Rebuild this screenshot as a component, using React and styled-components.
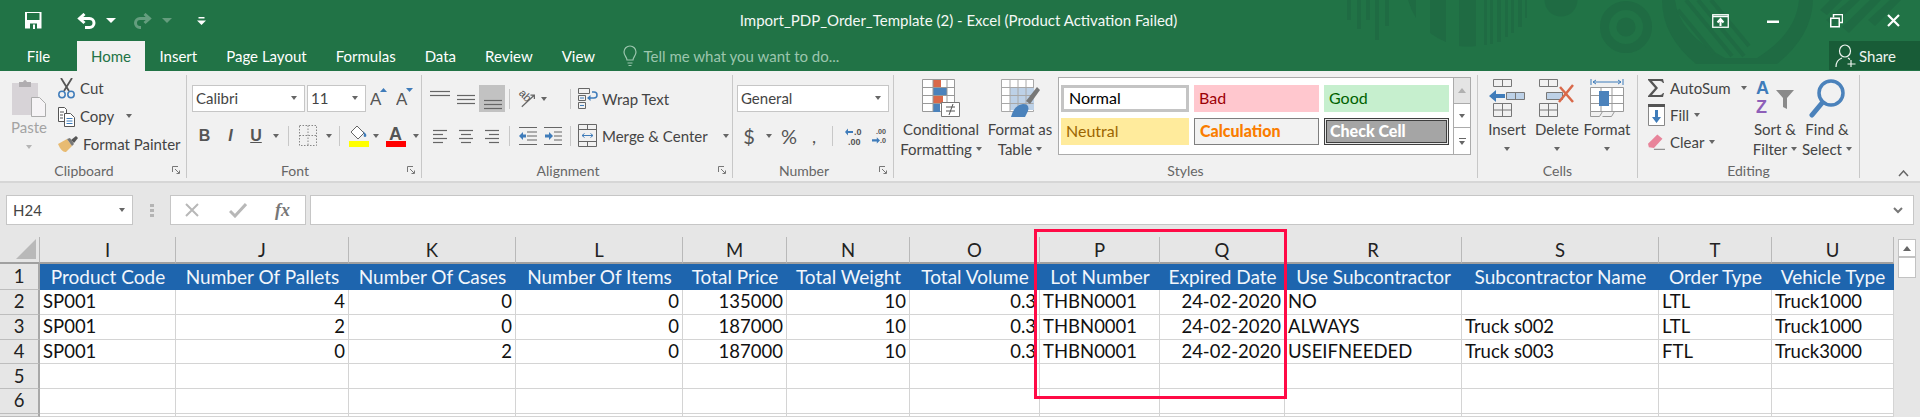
import React from "react";
import styled, { createGlobalStyle } from "styled-components";

const GlobalStyle = createGlobalStyle`
  html, body { margin: 0; padding: 0; background: #fff; }
  body { font-family: "Lato", "Open Sans", sans-serif; overflow: hidden; }
`;

const Page = styled.div`
  position: relative;
  width: 1920px;
  height: 417px;
  overflow: hidden;
`;

/* ---------- title bar ---------- */
const Head = styled.header`
  position: relative;
  height: 71px;
  background: #217346;
  color: #fff;
  overflow: hidden;
`;

const Decoration = styled.svg`
  position: absolute;
  left: 1340px;
  top: 0;
`;

const TitleRow = styled.div`
  position: relative;
  display: grid;
  grid-template-columns: 1fr auto 1fr;
  align-items: center;
  height: 41px;
`;

const Qat = styled.div`
  display: flex;
  align-items: center;
  padding-left: 25px;
`;

const QatItem = styled.span`
  display: flex;
  margin-left: ${(p) => p.$ml || 0}px;
  opacity: ${(p) => (p.$off ? 0.3 : 1)};
`;

const WhiteCaret = styled.i`
  display: block;
  width: 0;
  height: 0;
  border-left: 5px solid transparent;
  border-right: 5px solid transparent;
  border-top: 5px solid #fff;
`;

const Title = styled.div`
  font-size: 15px;
  color: #f4f8f5;
  padding-bottom: 2px;
  margin-right: 3px;
`;

const WinControls = styled.div`
  display: flex;
  justify-content: flex-end;
  align-items: center;
  padding-right: 20px;
`;

const WinBtn = styled.span`
  display: flex;
  justify-content: center;
  margin-left: ${(p) => p.$ml}px;
`;

const TabRow = styled.nav`
  position: relative;
  display: flex;
  align-items: stretch;
  height: 30px;
`;

const Tab = styled.div`
  display: flex;
  align-items: center;
  justify-content: center;
  width: ${(p) => (p.$w ? `${p.$w}px` : "auto")};
  padding: ${(p) => (p.$w ? "0" : "0 14.5px")};
  font-size: 15px;
  color: ${(p) => (p.$active ? "#217346" : "#fff")};
  background: ${(p) => (p.$active ? "#f1f1f1" : "transparent")};
`;

const TellMe = styled.div`
  display: flex;
  align-items: center;
  gap: 7px;
  margin-left: 13px;
  font-size: 15px;
  color: #9cc6ae;
`;

const Share = styled.div`
  display: flex;
  align-items: center;
  gap: 2px;
  margin-left: auto;
  width: 91px;
  height: 29px;
  padding-left: 6px;
  box-sizing: border-box;
  background: #185c37;
  font-size: 15px;
  color: #eef4f0;
`;

/* ---------- ribbon ---------- */
const Ribbon = styled.section`
  display: flex;
  box-sizing: border-box;
  height: 112px;
  padding-top: 4px;
  background: #f1f1f1;
  border-bottom: 2px solid #d6d6d6;
  font-size: 15px;
  color: #444;
`;

const Group = styled.div`
  display: flex;
  flex-direction: column;
  box-sizing: border-box;
  width: ${(p) => p.$w}px;
  height: 103px;
  border-right: 1px solid #c8c8c8;
`;

const GroupBody = styled.div`
  flex: 1;
  display: flex;
  min-height: 0;
  padding-left: ${(p) => p.$pl || 0}px;
`;

const GroupFoot = styled.div`
  display: flex;
  align-items: center;
  height: 12px;
  padding-bottom: 2px;
  font-size: 14px;
  color: #666;
`;

const GroupName = styled.span`
  flex: 1;
  text-align: center;
`;

const Launcher = styled.svg`
  width: 8px;
  height: 8px;
  margin: 0 6px 0 4px;
`;

const Caret = styled.i`
  display: block;
  flex-shrink: 0;
  width: 0;
  height: 0;
  border-left: 3.5px solid transparent;
  border-right: 3.5px solid transparent;
  border-top: 4px solid ${(p) => p.$c || "#666"};
  margin-left: ${(p) => p.$ml || 0}px;
`;

const PasteCol = styled.div`
  display: flex;
  flex-direction: column;
  align-items: center;
  width: 58px;
  color: #a3a3a3;
  padding-top: 4px;
`;

const PasteLabel = styled.div`
  line-height: 20px;
`;

const SmallCol = styled.div`
  display: flex;
  flex-direction: column;
  width: ${(p) => (p.$w ? `${p.$w}px` : "auto")};
  flex-shrink: 0;
  margin-top: -1px;
`;

const SmallBtn = styled.div`
  display: flex;
  align-items: center;
  height: ${(p) => p.$h || 28}px;
  gap: ${(p) => p.$gap || 5}px;
  white-space: nowrap;
`;

const IconSlot = styled.span`
  display: flex;
  justify-content: center;
  width: ${(p) => p.$w || 17}px;
  flex-shrink: 0;
  margin-top: 1px;
`;

const ToolRows = styled.div`
  display: flex;
  flex-direction: column;
  gap: 10px;
  padding-top: 10px;
`;

const ToolRow = styled.div`
  display: flex;
  align-items: center;
  height: 27px;
  white-space: nowrap;
`;

const Combo = styled.div`
  display: flex;
  align-items: center;
  justify-content: space-between;
  box-sizing: border-box;
  width: ${(p) => p.$w}px;
  height: 27px;
  margin-right: ${(p) => p.$mr || 0}px;
  padding: 0 7px 2px 3px;
  background: #fff;
  border: 1px solid #c6c6c6;
`;

const Cell = styled.span`
  display: flex;
  align-items: center;
  justify-content: center;
  flex-shrink: 0;
  width: ${(p) => p.$w}px;
  height: ${(p) => (p.$on ? "27px" : "auto")};
  background: ${(p) => (p.$on ? "#c2c2c2" : "transparent")};
`;

const Sep = styled.span`
  flex-shrink: 0;
  width: 1px;
  height: 20px;
  background: #c8c8c8;
  margin-left: ${(p) => p.$l}px;
  margin-right: ${(p) => p.$r}px;
`;

const FontBtn = styled.span`
  font-family: "Liberation Sans", sans-serif;
  font-size: ${(p) => p.$s || 16}px;
  font-weight: ${(p) => (p.$bold ? 700 : 400)};
  font-style: ${(p) => (p.$italic ? "italic" : "normal")};
  text-decoration: ${(p) => (p.$under ? "underline" : "none")};
  color: #555;
`;

const MoneyBtn = styled.span`
  font-size: ${(p) => p.$s || 20}px;
  color: #555;
`;

const BigBtn = styled.div`
  display: flex;
  flex-direction: column;
  align-items: center;
  flex-shrink: 0;
  width: ${(p) => p.$w}px;
  padding-top: 4px;
`;

const BigIcon = styled.div`
  display: flex;
  justify-content: center;
  height: 40px;
`;

const BigLine = styled.div`
  display: flex;
  align-items: center;
  justify-content: center;
  gap: 4px;
  height: 20px;
  white-space: nowrap;
`;

const Gallery = styled.div`
  display: flex;
  box-sizing: border-box;
  width: 413px;
  height: 78px;
  margin-top: 2px;
  background: #fff;
  border: 1px solid #ababab;
`;

const StyleGrid = styled.div`
  display: grid;
  grid-template-columns: 128px 125px 125px;
  grid-template-rows: 27px 27px;
  column-gap: 5px;
  row-gap: 6px;
  padding: 7px 0 0 2px;
  width: 394px;
  box-sizing: border-box;
`;

const StyleCell = styled.div`
  display: flex;
  align-items: center;
  box-sizing: border-box;
  padding: 0 0 2px 5px;
  font-size: 16px;
  font-weight: ${(p) => (p.$bold ? 900 : 400)};
  color: ${(p) => p.$c};
  background: ${(p) => p.$bg};
  border: ${(p) => p.$border || "none"};
  box-shadow: ${(p) => p.$shadow || "none"};
`;

const GalleryScroll = styled.div`
  display: flex;
  flex-direction: column;
  flex: 1;
  border-left: 1px solid #ababab;
`;

const GalleryBtn = styled.div`
  display: flex;
  flex-direction: column;
  align-items: center;
  justify-content: center;
  gap: 2px;
  flex: ${(p) => p.$h} 0 0;
  background: ${(p) => (p.$off ? "#e4e4e4" : "#fff")};
  border-bottom: ${(p) => (p.$last ? "none" : "1px solid #ababab")};
`;

const MiniBar = styled.i`
  display: block;
  width: 7px;
  height: 1px;
  background: #666;
`;

const UpCaret = styled.i`
  display: block;
  width: 0;
  height: 0;
  border-left: 4px solid transparent;
  border-right: 4px solid transparent;
  border-bottom: 5px solid ${(p) => p.$c || "#a8a8a8"};
`;

const Collapse = styled.div`
  flex: 1;
  display: flex;
  justify-content: flex-end;
  align-items: flex-end;
  padding: 0 11px 4px 0;
`;

/* ---------- formula bar ---------- */
const FormulaBar = styled.section`
  display: flex;
  align-items: center;
  box-sizing: border-box;
  height: 54px;
  padding: 0 6px;
  background: #e6e6e6;
  font-size: 15px;
  color: #444;
`;

const FieldBox = styled.div`
  display: flex;
  align-items: center;
  box-sizing: border-box;
  height: 30px;
  background: #fff;
  border: 1px solid #c6c6c6;
  width: ${(p) => (p.$w ? `${p.$w}px` : "auto")};
  flex: ${(p) => (p.$w ? "none" : 1)};
  justify-content: ${(p) => p.$justify || "flex-start"};
  padding: ${(p) => p.$pad || "0"};
  margin-left: ${(p) => p.$ml || 0}px;
`;

const Grip = styled.div`
  width: 37px;
  display: flex;
  flex-direction: column;
  align-items: center;
  gap: 2px;
  & > i {
    display: block;
    width: 4px;
    height: 3px;
    background: #b4b4b4;
  }
`;

const FxText = styled.span`
  font-family: "Liberation Serif", serif;
  font-style: italic;
  font-weight: 700;
  font-size: 18px;
  color: #777;
`;

/* ---------- sheet ---------- */
const SheetArea = styled.section`
  display: flex;
  height: 180px;
  background: #e6e6e6;
`;

const Sheet = styled.div`
  display: grid;
  grid-template-columns: 40px 136px 173px 167px 167px 104px 123px 130px 120px 125px 177px 197px 113px 122px;
  grid-template-rows: 27px 26px repeat(5, 24.75px) 3px;
  width: 1894px;
  background: #fff;
  font-size: 18.5px;
  color: #111;
`;

const Corner = styled.div`
  display: flex;
  justify-content: flex-end;
  align-items: flex-end;
  padding: 0 3px 3px 0;
  background: #e6e6e6;
  border-right: 1px solid #b5b5b5;
  border-bottom: 2px solid #a0a0a0;
`;

const ColHead = styled.div`
  display: flex;
  align-items: center;
  justify-content: center;
  padding-top: 1px;
  background: #e6e6e6;
  border-right: 1px solid #b9b9b9;
  border-bottom: 2px solid #a0a0a0;
  box-sizing: border-box;
  color: #222;
`;

const RowHead = styled.div`
  display: flex;
  align-items: center;
  justify-content: center;
  box-sizing: border-box;
  padding-bottom: 1px;
  background: #e6e6e6;
  border-right: 2px solid #a8a8a8;
  border-bottom: 1px solid #bdbdbd;
  color: #222;
`;

const TitleCell = styled.div`
  display: flex;
  align-items: center;
  justify-content: center;
  padding-bottom: 1px;
  font-size: 19px;
  white-space: nowrap;
  background: #1e65ae;
  color: #f2f6fb;
`;

const DataCell = styled.div`
  display: flex;
  align-items: center;
  justify-content: ${(p) => (p.$num ? "flex-end" : "flex-start")};
  box-sizing: border-box;
  padding: 0 3px 1px;
  white-space: nowrap;
  border-right: 1px solid #d4d4d4;
  border-bottom: 1px solid #d4d4d4;
`;

const ScrollTrack = styled.div`
  display: flex;
  flex-direction: column;
  align-items: center;
  flex: 1;
  padding: 2px 4px 0;
`;

const ScrollBtn = styled.div`
  display: flex;
  align-items: center;
  justify-content: center;
  box-sizing: border-box;
  width: 18px;
  height: 18px;
  background: #fff;
  border: 1px solid #c2c2c2;
`;

const ScrollThumb = styled.div`
  box-sizing: border-box;
  width: 18px;
  height: 21px;
  background: #fff;
  border: 1px solid #c2c2c2;
`;

const Callout = styled.div`
  position: absolute;
  left: 1034px;
  top: 229px;
  width: 253px;
  height: 170px;
  box-sizing: border-box;
  border: 3px solid #ff0a46;
`;

/* ---------- icons ---------- */
const SaveIcon = () => (
  <svg width="17" height="17" viewBox="0 0 17 17">
    <path d="M0 0h16.5v16.5H0z" fill="#fff" />
    <path d="M2 1h12.5v7H2z" fill="#217346" />
    <path d="M5 11.5h7V17H5z" fill="#217346" />
    <path d="M8 12.5h2V17H8z" fill="#fff" />
  </svg>
);

const UndoIcon = () => (
  <svg width="19" height="16" viewBox="0 0 19 16" fill="none" stroke="#fff" strokeWidth="3">
    <path d="M7.5 1 2.5 5.5 7.5 10M3 5.5h9.5a4.5 4.5 0 0 1 0 9H8" />
  </svg>
);

const RedoIcon = () => (
  <svg width="19" height="16" viewBox="0 0 19 16" fill="none" stroke="#fff" strokeWidth="3">
    <path d="M11.5 1l5 4.5-5 4.5M16 5.5H7a4.500 4.500 0 0 0 0 9h1" />
  </svg>
);

const CustomizeIcon = () => (
  <svg width="9" height="8" viewBox="0 0 9 8">
    <path d="M1.500 0h6v1.500h-6z" fill="#fff" />
    <path d="M0 3.500h9L4.500 8z" fill="#fff" />
  </svg>
);

const Backdrop = () => (
  <Decoration width="580" height="71" viewBox="0 0 580 71" fill="#1f6b43">
    <path d="M7 0h4v20H7zM17 0h4v29h-4zM26 0h4v20h-4zM35 0h4v40h-4zM45 0h4v26h-4z" />
    <path d="M68 0h8v18q-5-8-8-18z" />
    <path d="M90 0h16v42q-8-3-16-9zM119 0h17v46q-8 1-17 0z" />
    <path d="M144 0h3v45h-3zM150 0h3v44h-3zM157 0h4v42h-4zM165 0h3v37h-3zM171 0h3v33h-3zM178 0h4v27h-4zM185 0h2v18h-2z" />
    <circle cx="221" cy="0" r="16.500" />
    <circle cx="286" cy="27" r="21.500" fill="none" stroke="#1f6b43" strokeWidth="9" />
    <circle cx="286" cy="27" r="9.500" />
    <path d="M322 0h151q-1 36-36 64H356q-34-28-34-64z" />
    <path d="M335 0h124q-3 34-42 58h-32q-46-24-50-58z" fill="#217346" />
    <path d="M338 10l36 44M346 0l46 56M358 0l46 56M371 0l38 46" fill="none" stroke="#1f6b43" strokeWidth="4" />
    <path d="M490 0h12l-15 15-7-5zM510 0h10l-27 26-7-6zM530 0h11l-32 33-7-6zM550 0h11l-26 26-7-6z" />
  </Decoration>
);

const PinIcon = () => (
  <svg width="17" height="14" viewBox="0 0 17 14" fill="none">
    <rect x=".75" y=".75" width="15.500" height="12.500" stroke="#fff" strokeWidth="1.300" />
    <path d="M1 2.500h15" stroke="#fff" strokeWidth="1.500" />
    <path d="M8.500 12V6M5.500 8.500l3-3.500 3 3.500" stroke="#fff" strokeWidth="2" />
  </svg>
);

const MinIcon = () => (
  <svg width="12" height="10" viewBox="0 0 12 10"><path d="M0 4.500h12v2.500H0z" fill="#fff" /></svg>
);

const RestoreIcon = () => (
  <svg width="13" height="14" viewBox="0 0 13 14" fill="none" stroke="#fff" strokeWidth="1.500">
    <path d="M3.500 3.500v-3h9v8h-3" />
    <path d="M.75 4.250h8.500v8.500H.75z" />
  </svg>
);

const CloseIcon = () => (
  <svg width="13" height="13" viewBox="0 0 13 13" stroke="#fff" strokeWidth="2.200">
    <path d="M1 1l11 11M12 1 1 12" />
  </svg>
);

const BulbIcon = () => (
  <svg width="14" height="22" viewBox="0 0 14 22" fill="none" stroke="#9cc6ae" strokeWidth="1.200">
    <path d="M4 15c0-3-3-4-3-8a6 6 0 0 1 12 0c0 4-3 5-3 8zM4.500 18h5M5.500 20.500h3" />
  </svg>
);

const ShareIcon = () => (
  <svg width="22" height="24" viewBox="0 0 22 24" fill="none" stroke="#eef4f0" strokeWidth="1.200">
    <ellipse cx="10" cy="7" rx="5.500" ry="6" />
    <path d="M1 23c0-5 3-8 6-9M13 14l2 1.500M16 16v7M12.500 20h8" />
  </svg>
);

const PasteIcon = () => (
  <svg width="35" height="38" viewBox="0 0 35 38">
    <path d="M0 4h26v32H0z" fill="#d7d3d7" />
    <path d="M7 3h4q2-4 4 0h4v5H7z" fill="#b0adb0" />
    <path d="M19.500 18.500h8l6 6v13h-14z" fill="#f6f4f6" stroke="#acacac" />
  </svg>
);

const CutIcon = () => (
  <svg width="17" height="21" viewBox="0 0 17 21" fill="none">
    <path d="M3 0l8 13M14 0 6 13" stroke="#555" strokeWidth="1.800" />
    <circle cx="4" cy="16.500" r="3.200" stroke="#3f7cba" strokeWidth="1.500" />
    <circle cx="13" cy="16.500" r="3.200" stroke="#3f7cba" strokeWidth="1.500" />
  </svg>
);

const CopyIcon = () => (
  <svg width="17" height="20" viewBox="0 0 17 20" fill="none" stroke="#555">
    <path d="M.5.500h6l2 2v12h-8z" fill="#fff" />
    <path d="M6.500 6.500h6l4 4v9h-10z" fill="#fff" />
    <path d="M2 5h4M2 8h3M2 11h3" />
    <path d="M8.500 11.500h6M8.500 14h6M8.500 16.500h6" stroke="#3f7cba" />
  </svg>
);

const PainterIcon = () => (
  <svg width="20" height="17" viewBox="0 0 20 17">
    <path d="M0 8 9 3l5 7-6 6q-4 1-8-8z" fill="#e8bb72" />
    <path d="M9 3l5 7 2-2-4-6z" fill="#777" />
    <path d="M13 4l5-4 2 2-4 5z" fill="#555" />
  </svg>
);

const Launch = () => (
  <Launcher viewBox="0 0 8 8" fill="none" stroke="#777">
    <path d="M.500 6V.500H6" />
    <path d="M3 3l4 4M7.500 4.500v3h-3" />
  </Launcher>
);

const GrowIcon = ({ dir }) => (
  <svg width="18" height="26" viewBox="0 0 18 26">
    <text x="0" y="19" fontFamily="Liberation Sans" fontSize="17" fill="#555">A</text>
    <path d={dir === "up" ? "M10 6l3.500-4L17 6z" : "M10 2h7l-3.500 4z"} fill="#3f7cba" />
  </svg>
);

const LinesIcon = ({ rows, top = 0 }) => (
  <svg width="22" height="24" viewBox="0 0 22 24" stroke="#666" strokeWidth="1.200">
    {rows.map((r, i) => (
      <path key={i} d={`M${r[0]} ${top + i * 4 + .5}H${r[1]}`} />
    ))}
  </svg>
);

const BordersIcon = () => (
  <svg width="18" height="21" viewBox="0 0 18 21" fill="none" stroke="#888" strokeDasharray="1.500 1.500">
    <path d="M.5.500h17v20H.5zM.5 10.500h17M9 .5v20" />
  </svg>
);

const FillIcon = () => (
  <svg width="22" height="22" viewBox="0 0 22 22">
    <path d="M9 1l7 7-6 6-7-7z" fill="#fff" stroke="#666" />
    <path d="M15 6l3 3q1 3-1 3t-1-3z" fill="#3f7cba" />
    <path d="M1 16h20v6H1z" fill="#ffff00" />
  </svg>
);

const FontColorIcon = () => (
  <svg width="20" height="26" viewBox="0 0 20 26">
    <text x="3" y="17" fontFamily="Liberation Sans" fontWeight="700" fontSize="18" fill="#555">A</text>
    <path d="M0 18h20v6H0z" fill="#ff0000" />
  </svg>
);

const OrientIcon = () => (
  <svg width="30" height="30" viewBox="0 0 30 30" fill="none" stroke="#666" strokeWidth="1.400">
    <text x="12" y="15" textAnchor="middle" transform="rotate(45 12 12)" fontFamily="Liberation Sans" fontSize="13" fill="#555" stroke="none">ab</text>
    <path d="M9 24 23 11M19 10.500h4.500V15" />
  </svg>
);

const IndentIcon = ({ out }) => (
  <svg width="19" height="18" viewBox="0 0 19 18" fill="none">
    <path d={out ? "M1 .500h18M9 5h10M9 9h10M9 13h10M1 17.500h18" : "M0 .500h18M10 5h8M10 9h8M10 13h8M0 17.500h18"} stroke="#666" strokeWidth="1.100" />
    <path d={out ? "M1 9l4-4v2.500h3v3H5V13z" : "M9 9 5 5v2.500H1v3h4V13z"} fill="#3f7cba" />
  </svg>
);

const WrapIcon = () => (
  <svg width="20" height="21" viewBox="0 0 20 21" fill="none">
    <path d="M.500.500h11v5h-11zM.500 7.500h7v5h-7zM.500 14.500h7v6h-7z" stroke="#666" />
    <path d="M2 10h4M2 17.500h4" stroke="#3f7cba" />
    <path d="M14 4h2q3 0 3 3t-3 3h-5" stroke="#3f7cba" strokeWidth="1.500" />
    <path d="M9 10l3.500-3v6z" fill="#3f7cba" />
  </svg>
);

const MergeIcon = () => (
  <svg width="19" height="23" viewBox="0 0 19 23" fill="none">
    <path d="M.500.500h18v22H.500zM.500 5.500h18M.500 17.500h18M9.500.500v5M9.500 17.500v5" stroke="#666" />
    <path d="M4 11.500h11M4 11.500l2.500-2M4 11.500l2.500 2M15 11.500l-2.500-2M15 11.500l-2.500 2" stroke="#3f7cba" />
  </svg>
);

const DecimalIcon = ({ more }) => (
  <svg width="20" height="24" viewBox="0 0 20 24">
    {more ? (
      <>
        <text x="5" y="10" fontSize="9" fontWeight="700" fill="#555" fontFamily="Liberation Sans">.00</text>
        <path d="M0 16h6v-2.500l4 4-4 4V19H0z" fill="#3f7cba" />
        <text x="10" y="21" fontSize="9" fontWeight="700" fill="#555" fontFamily="Liberation Sans">.0</text>
      </>
    ) : (
      <>
        <path d="M8 7H3V4.500l-3 3.500 3 3.500V9h5z" fill="#3f7cba" />
        <text x="9" y="11" fontSize="9" fontWeight="700" fill="#555" fontFamily="Liberation Sans">.0</text>
        <text x="3" y="21" fontSize="9" fontWeight="700" fill="#555" fontFamily="Liberation Sans">.00</text>
      </>
    )}
  </svg>
);

const ConditionalIcon = () => (
  <svg width="38" height="38" viewBox="0 0 38 38" fill="none">
    <path d="M.500.500h32v32H.500z" fill="#fff" stroke="#999" />
    <path d="M11 1h8v7h-8z" fill="#d9694a" />
    <path d="M11 9h14v7H11z" fill="#4b82bb" />
    <path d="M11 17h10v7H11z" fill="#d9694a" />
    <path d="M11 25h7v8h-7z" fill="#4b82bb" />
    <path d="M.500 8.500h32M.500 16.500h32M.500 24.500h32M11 .5v32M25 .5v32" stroke="#999" />
    <path d="M19.500 23.500h18v14h-18z" fill="#fff" stroke="#777" />
    <path d="M24 28h9M24 32h9M31 25l-4 11" stroke="#555" />
  </svg>
);

const TableIcon = () => (
  <svg width="39" height="38" viewBox="0 0 39 38" fill="none">
    <path d="M.500.500h32v32H.500z" fill="#fff" stroke="#a8a8a8" />
    <path d="M9 9h24v22H9z" fill="#bdd1e7" />
    <path d="M.500 8.500h32M.500 16.500h32M.500 24.500h32M9 .5v32M17 .5v32M25 .5v32" stroke="#a8a8a8" />
    <path d="M25 22 36 8l3 3-10 14z" fill="#777" />
    <path d="M10 38q3-12 12-13 7 0 5 7l-3 6z" fill="#4b82bb" />
  </svg>
);

const InsertIcon = () => (
  <svg width="36" height="38" viewBox="0 0 36 38" fill="none" stroke="#777">
    <path d="M4.500.500h18v7h-18zM13.500.500v7M4.500 24.500h18v13h-18zM4.500 31h18M13.500 24.500v13" />
    <path d="M17.500 13.500h18v7h-18zM26.500 13.500v7" fill="#bdd1e7" />
    <path d="M0 17 7 11v4h9v4H7v4z" fill="#3f7cba" stroke="none" />
  </svg>
);

const DeleteIcon = () => (
  <svg width="36" height="38" viewBox="0 0 36 38" fill="none" stroke="#777">
    <path d="M.5.500h18v7H.5zM9.500.500v7M.5 24.500h18v13H.5zM.5 31h18M9.500 24.500v13" />
    <path d="M7.500 13.500h16v7h-16z" fill="#bdd1e7" />
    <path d="M21 8l13 15M34 6 20 23" stroke="#d9694a" strokeWidth="2.500" />
  </svg>
);

const FormatIcon = () => (
  <svg width="34" height="38" viewBox="0 0 34 38" fill="none" stroke="#999">
    <path d="M.500 8.500h33v24H.500zM11 8.500v24M22 8.500v24M.5 16.500h33M.5 24.500h33" fill="#fff" />
    <path d="M9 12h10v15H9z" fill="#4b82bb" stroke="none" />
    <path d="M.5 32.500v5h9l3-5M12.500 37.500h9l3-5" />
    <path d="M1 0v6M33 0v6M3 3h28M3 3l3-2M3 3l3 2M31 3l-3-2M31 3l-3 2" stroke="#3f7cba" />
  </svg>
);

const SigmaIcon = () => (
  <svg width="17" height="18" viewBox="0 0 17 18">
    <path d="M0 0h15l1 4h-1q-1-2-3-2H4l6 7-6 7h8q2 0 3-2h1l-1 4H0v-1l7-8-7-8z" fill="#555" />
  </svg>
);

const FillDownIcon = () => (
  <svg width="17" height="22" viewBox="0 0 17 22" fill="none">
    <path d="M.500.500h16v21H.500z" fill="#fff" stroke="#888" />
    <path d="M0 0h17v3H0z" fill="#555" />
    <path d="M7 6h3v7h3l-4.500 6L4 13h3z" fill="#3f7cba" />
  </svg>
);

const EraserIcon = () => (
  <svg width="20" height="19" viewBox="0 0 20 19">
    <path d="M11 0l6 5-10 11-6-1-1-4z" fill="#e8849a" />
    <path d="M7 17.500h13" stroke="#666" />
  </svg>
);

const SortIcon = () => (
  <svg width="38" height="40" viewBox="0 0 38 40">
    <text x="0" y="15" fontFamily="Liberation Sans" fontWeight="700" fontSize="18" fill="#3f7cba">A</text>
    <text x="0" y="34" fontFamily="Liberation Sans" fontWeight="700" fontSize="18" fill="#8e5fb8">Z</text>
    <path d="M20 11h18l-7 8v11l-4-2v-9z" fill="#8a8a8a" />
  </svg>
);

const FindIcon = () => (
  <svg width="36" height="40" viewBox="0 0 36 40" fill="none">
    <circle cx="22" cy="14" r="12" stroke="#4b82bb" strokeWidth="3.500" />
    <path d="M13 24 3 36" stroke="#4b82bb" strokeWidth="5" strokeLinecap="round" />
  </svg>
);

const XIcon = () => (
  <svg width="16" height="16" viewBox="0 0 16 16" stroke="#b8b8b8" strokeWidth="2"><path d="M2 2l12 12M14 2 2 14" /></svg>
);

const CheckIcon = () => (
  <svg width="18" height="15" viewBox="0 0 18 15" fill="none" stroke="#b8b8b8" strokeWidth="3"><path d="M1 8l5 5L17 1" /></svg>
);

/* ---------- data ---------- */
const columns = ["I", "J", "K", "L", "M", "N", "O", "P", "Q", "R", "S", "T", "U"];
const titles = [
  "Product Code", "Number Of Pallets", "Number Of Cases", "Number Of Items", "Total Price", "Total Weight",
  "Total Volume", "Lot Number", "Expired Date", "Use Subcontractor", "Subcontractor Name", "Order Type", "Vehicle Type",
];
const numeric = [false, true, true, true, true, true, true, false, true, false, false, false, false];
const rows = [
  ["SP001", "4", "0", "0", "135000", "10", "0.3", "THBN0001", "24-02-2020", "NO", "", "LTL", "Truck1000"],
  ["SP001", "2", "0", "0", "187000", "10", "0.3", "THBN0001", "24-02-2020", "ALWAYS", "Truck s002", "LTL", "Truck1000"],
  ["SP001", "0", "2", "0", "187000", "10", "0.3", "THBN0001", "24-02-2020", "USEIFNEEDED", "Truck s003", "FTL", "Truck3000"],
  Array(13).fill(""),
  Array(13).fill(""),
  Array(13).fill(""),
];
const tabs = ["Insert", "Page Layout", "Formulas", "Data", "Review", "View"];

export default function App() {
  return (
    <Page>
      <GlobalStyle />
      <Head>
        <Backdrop />
        <TitleRow>
          <Qat>
            <QatItem><SaveIcon /></QatItem>
            <QatItem $ml={35}><UndoIcon /></QatItem>
            <QatItem $ml={10}><WhiteCaret /></QatItem>
            <QatItem $ml={17} $off><RedoIcon /></QatItem>
            <QatItem $ml={10} $off><WhiteCaret /></QatItem>
            <QatItem $ml={25}><CustomizeIcon /></QatItem>
          </Qat>
          <Title>Import_PDP_Order_Template (2) - Excel (Product Activation Failed)</Title>
          <WinControls>
            <WinBtn $ml={0}><PinIcon /></WinBtn>
            <WinBtn $ml={38}><MinIcon /></WinBtn>
            <WinBtn $ml={51}><RestoreIcon /></WinBtn>
            <WinBtn $ml={44}><CloseIcon /></WinBtn>
          </WinControls>
        </TitleRow>
        <TabRow>
          <Tab $w={77}>File</Tab>
          <Tab $w={68} $active>Home</Tab>
          {tabs.map((t) => <Tab key={t}>{t}</Tab>)}
          <TellMe><BulbIcon />Tell me what you want to do...</TellMe>
          <Share><ShareIcon />Share</Share>
        </TabRow>
      </Head>

      <Ribbon>
        <Group $w={187}>
          <GroupBody>
            <PasteCol>
              <PasteIcon />
              <PasteLabel>Paste</PasteLabel>
              <BigLine><Caret $c="#b5b5b5" /></BigLine>
            </PasteCol>
            <SmallCol>
              <SmallBtn><IconSlot><CutIcon /></IconSlot>Cut</SmallBtn>
              <SmallBtn><IconSlot><CopyIcon /></IconSlot>Copy<Caret $ml={7} /></SmallBtn>
              <SmallBtn><IconSlot $w={20}><PainterIcon /></IconSlot>Format Painter</SmallBtn>
            </SmallCol>
          </GroupBody>
          <GroupFoot><GroupName>Clipboard</GroupName><Launch /></GroupFoot>
        </Group>

        <Group $w={235}>
          <GroupBody $pl={5}>
            <ToolRows>
              <ToolRow>
                <Combo $w={113} $mr={2}>Calibri<Caret /></Combo>
                <Combo $w={59}>11<Caret /></Combo>
                <Cell $w={26}><GrowIcon dir="up" /></Cell>
                <Cell $w={25}><GrowIcon dir="down" /></Cell>
              </ToolRow>
              <ToolRow>
                <Cell $w={25}><FontBtn $bold>B</FontBtn></Cell>
                <Cell $w={27}><FontBtn $bold $italic>I</FontBtn></Cell>
                <Cell $w={24}><FontBtn $bold $under>U</FontBtn></Cell>
                <Cell $w={16}><Caret /></Cell>
                <Sep $l={4} $r={4} />
                <Cell $w={30}><BordersIcon /></Cell>
                <Cell $w={11}><Caret /></Cell>
                <Sep $l={5} $r={5} />
                <Cell $w={28}><FillIcon /></Cell>
                <Cell $w={6}><Caret /></Cell>
                <Cell $w={34}><FontColorIcon /></Cell>
                <Cell $w={6}><Caret /></Cell>
              </ToolRow>
            </ToolRows>
          </GroupBody>
          <GroupFoot><GroupName>Font</GroupName><Launch /></GroupFoot>
        </Group>

        <Group $w={311}>
          <GroupBody $pl={5}>
            <ToolRows>
              <ToolRow>
                <Cell $w={26}><LinesIcon rows={[[1, 21], [1, 21]]} top={4} /></Cell>
                <Cell $w={26}><LinesIcon rows={[[2, 20], [2, 20], [2, 20]]} top={8} /></Cell>
                <Cell $w={26} $on><LinesIcon rows={[[3, 21], [3, 21], [3, 21]]} top={13} /></Cell>
                <Sep $l={4} $r={4} />
                <Cell $w={26}><OrientIcon /></Cell>
                <Cell $w={8}><Caret /></Cell>
                <Sep $l={22} $r={7} />
                <SmallBtn $h={27} $gap={4}><WrapIcon />Wrap Text</SmallBtn>
              </ToolRow>
              <ToolRow>
                <Cell $w={26}><LinesIcon rows={[[4, 18], [4, 14], [4, 18], [4, 14]]} top={6} /></Cell>
                <Cell $w={26}><LinesIcon rows={[[4, 18], [6, 16], [4, 18], [6, 16]]} top={6} /></Cell>
                <Cell $w={26}><LinesIcon rows={[[4, 18], [8, 18], [4, 18], [8, 18]]} top={6} /></Cell>
                <Sep $l={4} $r={4} />
                <Cell $w={27}><IndentIcon out /></Cell>
                <Cell $w={25}><IndentIcon /></Cell>
                <Sep $l={4} $r={7} />
                <SmallBtn $h={27} $gap={5}><MergeIcon />Merge &amp; Center<Caret $ml={10} /></SmallBtn>
              </ToolRow>
            </ToolRows>
          </GroupBody>
          <GroupFoot><GroupName>Alignment</GroupName><Launch /></GroupFoot>
        </Group>

        <Group $w={161}>
          <GroupBody $pl={4}>
            <ToolRows>
              <ToolRow><Combo $w={152}>General<Caret /></Combo></ToolRow>
              <ToolRow>
                <Cell $w={24}><MoneyBtn>$</MoneyBtn></Cell>
                <Cell $w={16}><Caret /></Cell>
                <Cell $w={24}><MoneyBtn>%</MoneyBtn></Cell>
                <Cell $w={26}><MoneyBtn $s={18}>,</MoneyBtn></Cell>
                <Sep $l={5} $r={5} />
                <Cell $w={34}><DecimalIcon /></Cell>
                <Cell $w={16}><DecimalIcon more /></Cell>
              </ToolRow>
            </ToolRows>
          </GroupBody>
          <GroupFoot><GroupName>Number</GroupName><Launch /></GroupFoot>
        </Group>

        <Group $w={584}>
          <GroupBody $pl={6}>
            <BigBtn $w={82}>
              <BigIcon><ConditionalIcon /></BigIcon>
              <BigLine>Conditional</BigLine>
              <BigLine>Formatting<Caret /></BigLine>
            </BigBtn>
            <BigBtn $w={76}>
              <BigIcon><TableIcon /></BigIcon>
              <BigLine>Format as</BigLine>
              <BigLine>Table<Caret /></BigLine>
            </BigBtn>
            <Gallery>
              <StyleGrid>
                <StyleCell $c="#000" $bg="#fff" $border="3px solid #c4c4c4">Normal</StyleCell>
                <StyleCell $c="#9c0006" $bg="#ffc7ce">Bad</StyleCell>
                <StyleCell $c="#006100" $bg="#c6efce">Good</StyleCell>
                <StyleCell $c="#9c6500" $bg="#ffeb9c">Neutral</StyleCell>
                <StyleCell $c="#fa7d00" $bg="#f2f2f2" $bold $border="1px solid #7f7f7f">Calculation</StyleCell>
                <StyleCell
                  $c="#fff"
                  $bg="#a5a5a5"
                  $bold
                  $border="1px solid #3f3f3f"
                  $shadow="inset 0 0 0 1px #e8e8e8, inset 0 0 0 2px #3f3f3f"
                >
                  Check Cell
                </StyleCell>
              </StyleGrid>
              <GalleryScroll>
                <GalleryBtn $h={25} $off><UpCaret $c="#b0b0b0" /></GalleryBtn>
                <GalleryBtn $h={23}><Caret /></GalleryBtn>
                <GalleryBtn $h={26} $last><MiniBar /><Caret /></GalleryBtn>
              </GalleryScroll>
            </Gallery>
          </GroupBody>
          <GroupFoot><GroupName>Styles</GroupName></GroupFoot>
        </Group>

        <Group $w={160}>
          <GroupBody $pl={4}>
            <BigBtn $w={50}>
              <BigIcon><InsertIcon /></BigIcon>
              <BigLine>Insert</BigLine>
              <BigLine><Caret /></BigLine>
            </BigBtn>
            <BigBtn $w={50}>
              <BigIcon><DeleteIcon /></BigIcon>
              <BigLine>Delete</BigLine>
              <BigLine><Caret /></BigLine>
            </BigBtn>
            <BigBtn $w={50}>
              <BigIcon><FormatIcon /></BigIcon>
              <BigLine>Format</BigLine>
              <BigLine><Caret /></BigLine>
            </BigBtn>
          </GroupBody>
          <GroupFoot><GroupName>Cells</GroupName></GroupFoot>
        </Group>

        <Group $w={222}>
          <GroupBody $pl={10}>
            <SmallCol $w={101}>
              <SmallBtn $h={27}><IconSlot><SigmaIcon /></IconSlot>AutoSum<Caret $ml={5} /></SmallBtn>
              <SmallBtn $h={27}><IconSlot><FillDownIcon /></IconSlot>Fill<Caret /></SmallBtn>
              <SmallBtn $h={27}><IconSlot><EraserIcon /></IconSlot>Clear<Caret /></SmallBtn>
            </SmallCol>
            <BigBtn $w={52}>
              <BigIcon><SortIcon /></BigIcon>
              <BigLine>Sort &amp;</BigLine>
              <BigLine>Filter<Caret /></BigLine>
            </BigBtn>
            <BigBtn $w={52}>
              <BigIcon><FindIcon /></BigIcon>
              <BigLine>Find &amp;</BigLine>
              <BigLine>Select<Caret /></BigLine>
            </BigBtn>
          </GroupBody>
          <GroupFoot><GroupName>Editing</GroupName></GroupFoot>
        </Group>

        <Collapse>
          <svg width="11" height="7" viewBox="0 0 11 7" fill="none" stroke="#666" strokeWidth="1.500"><path d="M1 6l4.500-5L10 6" /></svg>
        </Collapse>
      </Ribbon>

      <FormulaBar>
        <FieldBox $w={127} $pad="0 7px 0 6px" $justify="space-between">H24<Caret /></FieldBox>
        <Grip><i /><i /><i /></Grip>
        <FieldBox $w={136} $pad="0 15px 0 13px" $justify="space-between">
          <XIcon /><CheckIcon /><FxText>fx</FxText>
        </FieldBox>
        <FieldBox $ml={4} $pad="0 10px" $justify="flex-end">
          <svg width="10" height="7" viewBox="0 0 10 7" fill="none" stroke="#777" strokeWidth="2"><path d="M1 1l4 4 4-4" /></svg>
        </FieldBox>
      </FormulaBar>

      <SheetArea>
        <Sheet>
          <Corner>
            <svg width="20" height="20" viewBox="0 0 20 20"><path d="M20 0v20H0z" fill="#b9b9b9" /></svg>
          </Corner>
          {columns.map((c) => <ColHead key={c}>{c}</ColHead>)}
          <RowHead>1</RowHead>
          {titles.map((t) => <TitleCell key={t}>{t}</TitleCell>)}
          {rows.map((row, i) => (
            <React.Fragment key={i}>
              <RowHead>{i < 5 ? i + 2 : ""}</RowHead>
              {row.map((v, j) => <DataCell key={j} $num={numeric[j]}>{v}</DataCell>)}
            </React.Fragment>
          ))}
        </Sheet>
        <ScrollTrack>
          <ScrollBtn><UpCaret $c="#666" /></ScrollBtn>
          <ScrollThumb />
        </ScrollTrack>
      </SheetArea>

      <Callout />
    </Page>
  );
}
